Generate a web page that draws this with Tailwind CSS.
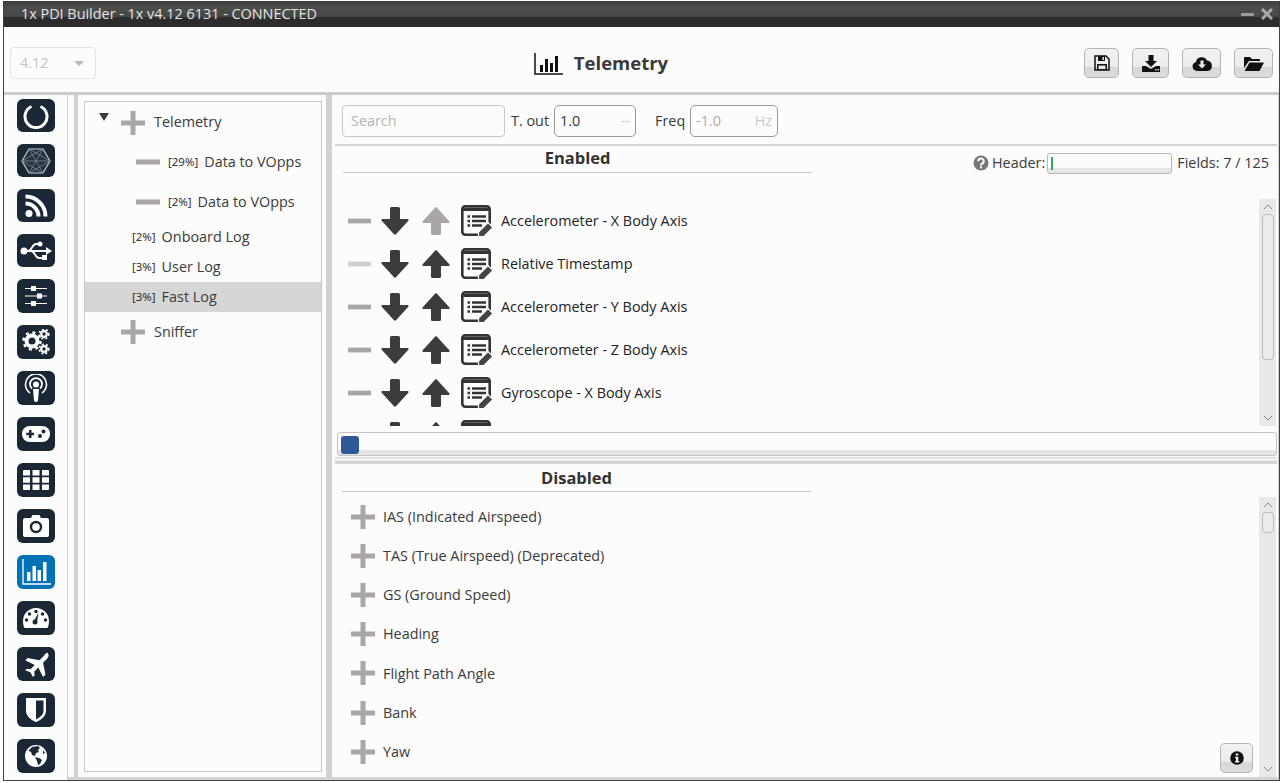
<!DOCTYPE html>
<html lang="en">
<head>
<meta charset="UTF-8">
<title>1x PDI Builder</title>
<script src="https://cdn.jsdelivr.net/npm/@tailwindcss/browser@4"></script>
</head>
<body class="bg-white overflow-hidden font-['Open_Sans',sans-serif] text-[14.4px] text-[#3a3a3a]">
<svg class="hidden">
  <symbol id="plus" viewBox="0 0 24 24"><path fill="#aba6a6" d="M9.5 0h5v9.5H24v5h-9.5V24h-5v-9.5H0v-5h9.5z"/></symbol>
  <symbol id="minus" viewBox="0 0 24 6"><rect y="0.5" width="24" height="5" fill="#aba6a6"/></symbol>
  <symbol id="down" viewBox="0 0 28 28"><path fill="currentColor" d="M9 1.500a1.500 1.500 0 0 1 1.500-1.500h7a1.500 1.500 0 0 1 1.500 1.500V12h7.500c1 0 1.500 1 .8 1.800L15 27.200c-.6.600-1.500.600-2 0L.7 13.800C0 13 .5 12 1.500 12H9z"/></symbol>
  <symbol id="note" viewBox="0 0 32 32">
    <path fill="none" stroke="#333" stroke-width="2.600" d="M28.700 20V4.300a3 3 0 0 0-3-3H4.300a3 3 0 0 0-3 3v22.400a3 3 0 0 0 3 3H18"/>
    <path fill="#333" d="M1 2.500h28V6H1z"/>
    <path stroke="#333" stroke-width="2.400" d="M6.500 11.500h2.500M11 11.500h14M6.500 16h2.500M11 16h14M6.500 20.500h2.500M11 20.500h10"/>
    <path fill="#444" stroke="#fcfcfc" stroke-width="1.200" d="M27 17.500l5 5-9 9h-5.500V27z"/>
  </symbol>
</svg>

<div class="w-[1283px] h-[783px] pl-[3px] pr-[3px] pt-[1px] pb-[2px]">
<div class="h-full border-x border-b border-[#404040] flex flex-col bg-[#fcfcfc]">

  <!-- title bar -->
  <div class="h-[26px] shrink-0 flex items-center justify-between pl-[17px] pr-[6px] text-[#e4e4e4] bg-[linear-gradient(#3b3b3b_0%,#4b4d4b_25%,#474947_60%,#2e2e2e_62%,#2b2b2b_100%)]">
    <span>1x PDI Builder - 1x v4.12 6131 - CONNECTED</span>
    <div class="flex items-center gap-[7px]">
      <div class="w-[13px] h-[3px] bg-[#9a9a9a]"></div>
      <svg class="w-[12px] h-[12px]" viewBox="0 0 12 12"><path stroke="#a8a8a8" stroke-width="3" d="M1 1l10 10M11 1L1 11"/></svg>
    </div>
  </div>

  <!-- header -->
  <div class="h-[68px] shrink-0 relative flex items-center justify-center border-b-[3px] border-[#cbcbcb]">
    <div class="absolute left-[6px] top-[20px] w-[86px] h-[32px] border border-[#e4e4e4] rounded-[4px] flex items-center justify-between pl-[9px] pr-[11px] text-[#c4c4c4]">
      <span>4.12</span>
      <div class="w-0 h-0 border-x-[5px] border-x-transparent border-t-[5px] border-t-[#b8b8b8]"></div>
    </div>
    <div class="flex items-center gap-[11px] mr-[81px] mt-[8px]">
      <svg class="w-[29px] h-[22px]" viewBox="0 0 29 22"><path fill="none" stroke="#111" stroke-width="1.500" d="M1 0v21h28"/><path fill="#111" d="M6 12h3v7H6zM11 6h3v13h-3zM16 10h3v9h-3zM21 3h3v16h-3z"/></svg>
      <span class="text-[18.500px] font-bold leading-none text-[#3a3a3a]">Telemetry</span>
    </div>
    <div class="absolute left-[1080px] top-[21px] flex">
      <button class="w-[35px] h-[30px] rounded-[5px] border border-[#b4b4b4] bg-[linear-gradient(#f2f2f2_0%,#ececec_65%,#d8d8d8_66%,#dcdcdc_100%)] flex items-center justify-center">
        <svg class="w-[16px] h-[16px]" viewBox="0 0 16 16"><path fill="none" stroke="#111" stroke-width="1.500" d="M1 1h11l3 3v11H1z"/><path fill="#111" d="M4 1h7v5H4zM3 9h10v6H3z"/><path fill="#e8e8e8" d="M8.500 2h1.500v3H8.500zM4.500 10.500h7V14h-7z"/></svg>
      </button>
      <button class="ml-[13px] w-[37px] h-[30px] rounded-[5px] border border-[#b4b4b4] bg-[linear-gradient(#f2f2f2_0%,#ececec_65%,#d8d8d8_66%,#dcdcdc_100%)] flex items-center justify-center">
        <svg class="w-[18px] h-[17px]" viewBox="0 0 18 17"><path fill="#111" d="M6.500 0h5v6H15L9 12 3 6h3.500zM0 11h4l5 3 5-3h4v6H0z"/><path fill="#ddd" d="M13 14h1.500v1.500H13zM15.500 14H17v1.500h-1.500z"/></svg>
      </button>
      <button class="ml-[13px] w-[39px] h-[30px] rounded-[5px] border border-[#b4b4b4] bg-[linear-gradient(#f2f2f2_0%,#ececec_65%,#d8d8d8_66%,#dcdcdc_100%)] flex items-center justify-center">
        <svg class="w-[20px] h-[15px]" viewBox="0 0 20 15"><path fill="#111" d="M5 15a4.500 4.500 0 0 1-1.200-8.800A6 6 0 0 1 15 4.500 5.300 5.300 0 0 1 15.500 15z"/><path fill="#e8e8e8" d="M8.500 4.500h3v4h2.500L10 12.500 6 8.500h2.500z"/></svg>
      </button>
      <button class="ml-[13px] w-[39px] h-[30px] rounded-[5px] border border-[#b4b4b4] bg-[linear-gradient(#f2f2f2_0%,#ececec_65%,#d8d8d8_66%,#dcdcdc_100%)] flex items-center justify-center">
        <svg class="w-[20px] h-[15px]" viewBox="0 0 20 15"><path fill="#111" d="M0 2a1 1 0 0 1 1-1h5l2 2h7a1 1 0 0 1 1 1v1H5L0 12z"/><path fill="#111" d="M5.500 6.500H20L15.500 15H0.500z"/></svg>
      </button>
    </div>
  </div>

  <!-- main -->
  <div class="flex-1 min-h-0 flex">

    <!-- icon rail -->
    <div class="w-[64px] shrink-0 flex flex-col items-start pl-[13px] pt-[4px] border-r border-[#cfcfcf]">
      <div class="w-[38px] h-[33px] rounded-[6px] bg-[#1a2836] flex items-center justify-center">
        <svg class="w-[26px] h-[26px]" viewBox="0 0 26 26"><path fill="none" stroke="#fff" stroke-width="3" d="M8.500 3.500a11 11 0 1 0 9 0"/></svg>
      </div>
      <div class="mt-[12px] w-[38px] h-[33px] rounded-[6px] bg-[#1a2836] flex items-center justify-center">
        <svg class="w-[30px] h-[28px]" viewBox="0 0 30 28"><path fill="#25333f" stroke="#c8ccd0" stroke-width="1.200" d="M8 2h14l7 12-7 12H8L1 14z"/><path fill="none" stroke="#8a949c" stroke-width=".7" d="M8 2l14 24M22 2L8 26M1 14h28M8 2l21 12M22 2L1 14M8 26l21-12M22 26L1 14"/></svg>
      </div>
      <div class="mt-[12px] w-[38px] h-[33px] rounded-[6px] bg-[#1a2836] flex items-center justify-center">
        <svg class="w-[24px] h-[24px]" viewBox="0 0 24 24"><circle cx="5" cy="19.500" r="3.500" fill="#fff"/><path fill="none" stroke="#fff" stroke-width="4" d="M1.500 9.500a13 13 0 0 1 13 13M1.500 2.500a20 20 0 0 1 20 20"/></svg>
      </div>
      <div class="mt-[12px] w-[38px] h-[33px] rounded-[6px] bg-[#1a2836] flex items-center justify-center">
        <svg class="w-[32px] h-[22px]" viewBox="0 0 32 22"><path fill="none" stroke="#fff" stroke-width="1.800" d="M4 11h25M8 11c4 0 4-7 8-7h3M11 11c4 0 4 7 8 7h3"/><circle cx="4" cy="11" r="3.500" fill="#fff"/><path fill="#fff" d="M26 7l6 4-6 4zM22 15h5v5h-5z"/><circle cx="20" cy="4" r="2.500" fill="#fff"/></svg>
      </div>
      <div class="mt-[12px] w-[38px] h-[34px] rounded-[6px] bg-[#1a2836] flex items-center justify-center">
        <svg class="w-[22px] h-[22px]" viewBox="0 0 22 22"><path stroke="#fff" stroke-width="1.200" d="M0 3.500h22M0 11h22M0 18.500h22"/><path fill="#fff" d="M6 1h5v5H6zM12 8.500h5v5h-5zM6 16h5v5H6z"/></svg>
      </div>
      <div class="mt-[12px] w-[38px] h-[34px] rounded-[6px] bg-[#1a2836] flex items-center justify-center">
        <svg class="w-[28px] h-[26px]" viewBox="0 0 28 26"><circle cx="10" cy="12" r="5.500" fill="none" stroke="#fff" stroke-width="4"/><circle cx="10" cy="12" r="8.500" fill="none" stroke="#fff" stroke-width="2.500" stroke-dasharray="3 3.700"/><circle cx="22" cy="5" r="2.800" fill="none" stroke="#fff" stroke-width="2.200"/><circle cx="22" cy="5" r="4.800" fill="none" stroke="#fff" stroke-width="1.600" stroke-dasharray="2 2"/><circle cx="22" cy="20" r="2.800" fill="none" stroke="#fff" stroke-width="2.200"/><circle cx="22" cy="20" r="4.800" fill="none" stroke="#fff" stroke-width="1.600" stroke-dasharray="2 2"/></svg>
      </div>
      <div class="mt-[12px] w-[38px] h-[34px] rounded-[6px] bg-[#1a2836] flex items-center justify-center">
        <svg class="w-[24px] h-[28px]" viewBox="0 0 24 28"><path fill="none" stroke="#fff" stroke-width="1.600" d="M6 19a10.500 10.500 0 1 1 12 0"/><path fill="none" stroke="#fff" stroke-width="1.800" d="M8 14.500a6 6 0 1 1 8 0"/><circle cx="12" cy="10.500" r="3" fill="#fff"/><path fill="#fff" d="M9 15h6l-1 11a2 2 0 0 1-4 0z"/></svg>
      </div>
      <div class="mt-[12px] w-[38px] h-[34px] rounded-[6px] bg-[#1a2836] flex items-center justify-center">
        <svg class="w-[28px] h-[16px]" viewBox="0 0 28 16"><rect width="28" height="16" rx="7.500" fill="#fff"/><path fill="#1a2836" d="M7 4h2.500v2.700H12v2.600H9.500V12H7V9.300H4.300V6.700H7z"/><circle cx="21.500" cy="5.500" r="2" fill="#1a2836"/><circle cx="18" cy="10" r="2" fill="#1a2836"/></svg>
      </div>
      <div class="mt-[12px] w-[38px] h-[34px] rounded-[6px] bg-[#1a2836] flex items-center justify-center">
        <svg class="w-[26px] h-[20px]" viewBox="0 0 26 20"><path fill="#fff" d="M0 1a1 1 0 0 1 1-1h6v5.500H0zM9.500 0h7v5.500h-7zM19 0h6a1 1 0 0 1 1 1v4.500h-7zM0 7.200h7v5.600H0zM9.500 7.200h7v5.600h-7zM19 7.200h7v5.600h-7zM0 14.500h7V20H1a1 1 0 0 1-1-1zM9.500 14.500h7V20h-7zM19 14.500h7V19a1 1 0 0 1-1 1h-6z"/></svg>
      </div>
      <div class="mt-[12px] w-[38px] h-[34px] rounded-[6px] bg-[#1a2836] flex items-center justify-center">
        <svg class="w-[26px] h-[22px]" viewBox="0 0 26 22"><path fill="#fff" d="M2 3h6l1.500-3h7L18 3h6a2 2 0 0 1 2 2v15a2 2 0 0 1-2 2H2a2 2 0 0 1-2-2V5a2 2 0 0 1 2-2z"/><circle cx="13" cy="12" r="5" fill="none" stroke="#1a2836" stroke-width="2.400"/></svg>
      </div>
      <div class="mt-[12px] w-[38px] h-[34px] rounded-[6px] bg-[#0072b5] flex items-center justify-center">
        <svg class="w-[29px] h-[26px]" viewBox="0 0 29 26"><path fill="none" stroke="#fff" stroke-width="1.300" d="M1 0v25h28"/><path fill="#fff" d="M5 13h3.500v9H5zM10.500 7H14v15h-3.500zM15.500 11H19v11h-3.500zM21 3h3.500v19H21z"/></svg>
      </div>
      <div class="mt-[12px] w-[38px] h-[34px] rounded-[6px] bg-[#1a2836] flex items-center justify-center">
        <svg class="w-[26px] h-[20px]" viewBox="0 0 26 20"><path fill="#fff" d="M13 0a13 13 0 0 1 13 13c0 2.500-.5 5-1.500 7h-23C.5 18 0 15.500 0 13A13 13 0 0 1 13 0z"/><g fill="#1a2836"><circle cx="13" cy="3.500" r="1.700"/><circle cx="6.500" cy="6" r="1.700"/><circle cx="3.500" cy="12" r="1.700"/><circle cx="22.500" cy="12" r="1.700"/><circle cx="19.500" cy="6" r="1.700"/><circle cx="12" cy="14" r="2.500"/><path d="M15.500 4.500l-1.500 9.500-3-1z"/></g></svg>
      </div>
      <div class="mt-[12px] w-[38px] h-[34px] rounded-[6px] bg-[#1a2836] flex items-center justify-center">
        <svg class="w-[25px] h-[25px]" viewBox="0 0 21 21"><path fill="#fff" d="M20 1c1.200 1.200.6 3.500-1 5l-3 3 2 10-2 2-4-8-3.500 3.500 .5 3-1.500 1.500-2.200-4L1 15.300 2.500 14l3 .5L9 11 1 7l2-2 10 2 3-3c1.500-1.600 2.800-4.200 4-3z"/></svg>
      </div>
      <div class="mt-[12px] w-[38px] h-[34px] rounded-[6px] bg-[#1a2836] flex items-center justify-center">
        <svg class="w-[20px] h-[24px]" viewBox="0 0 20 24"><path fill="#fff" d="M0 0h20v13c0 5-5 9-10 11C5 22 0 18 0 13z"/><path fill="#1a2836" d="M10 2.500h7.500V13c0 3.500-3.500 6.500-7.500 8.300z"/></svg>
      </div>
      <div class="mt-[12px] w-[38px] h-[34px] rounded-[6px] bg-[#1a2836] flex items-center justify-center">
        <svg class="w-[22px] h-[22px]" viewBox="0 0 22 22"><circle cx="11" cy="11" r="11" fill="#fff"/><path fill="#1a2836" d="M4 5l3-3 6-1 2 2-2 2 1 2-3 1-1 3-3-1-1-3-2-1zM10 12l4 1 3 2-2 4-2 1-1-4zM18 5l2 3-2 1z"/></svg>
      </div>
    </div>

    <!-- everything right of the rail sits on a grey bottom band -->
    <div class="flex-1 min-w-0 flex border-b-[3px] border-[#d4d4d4]">
      <div class="w-[16px] shrink-0 pl-[6px]"><div class="w-[4px] h-full bg-[#d2d2d2]"></div></div>

      <!-- tree -->
      <div class="w-[238px] shrink-0 mt-[6px] mb-[5px] border border-[#c8c8c8]">
        <div class="relative h-[40px] flex items-center pl-[36px]">
          <div class="absolute left-[14px] top-[11px] w-0 h-0 border-x-[5px] border-x-transparent border-t-[8px] border-t-[#3a3a3a]"></div>
          <svg class="w-[24px] h-[24px] mt-[1px]"><use href="#plus"/></svg>
          <span class="ml-[9px]">Telemetry</span>
        </div>
        <div class="h-[40px] flex items-center pl-[51px]">
          <svg class="w-[24px] h-[6px]"><use href="#minus"/></svg>
          <span class="ml-[8px] text-[11.500px] text-[#222]">[29%]</span><span class="ml-[6px]">Data to VOpps</span>
        </div>
        <div class="h-[40px] flex items-center pl-[51px]">
          <svg class="w-[24px] h-[6px]"><use href="#minus"/></svg>
          <span class="ml-[8px] text-[11.500px] text-[#222]">[2%]</span><span class="ml-[6px]">Data to VOpps</span>
        </div>
        <div class="h-[30px] flex items-center pl-[47px]"><span class="text-[11.500px] text-[#222]">[2%]</span><span class="ml-[6px]">Onboard Log</span></div>
        <div class="h-[30px] flex items-center pl-[47px]"><span class="text-[11.500px] text-[#222]">[3%]</span><span class="ml-[6px]">User Log</span></div>
        <div class="h-[30px] flex items-center pl-[47px] bg-[#d6d6d6]"><span class="text-[11.500px] text-[#222]">[3%]</span><span class="ml-[6px]">Fast Log</span></div>
        <div class="h-[40px] flex items-center pl-[36px]">
          <svg class="w-[24px] h-[24px]"><use href="#plus"/></svg>
          <span class="ml-[9px]">Sniffer</span>
        </div>
      </div>

      <div class="w-[13px] shrink-0 pl-[4px]"><div class="w-[6px] h-full bg-[#d2d2d2]"></div></div>

      <!-- right side -->
      <div class="flex-1 min-w-0 flex flex-col border-r border-[#cfcfcf] pr-[1px]">
        <!-- filter row -->
        <div class="h-[51px] shrink-0 flex items-center pl-[7px] pt-[3px] border-b-2 border-[#d2d2d2]">
          <div class="w-[163px] h-[32px] border border-[#c8c8c8] rounded-[4px] flex items-center pl-[8px] text-[#b4b4b4]">Search</div>
          <span class="ml-[6px] w-[43px]">T. out</span>
          <div class="w-[82px] h-[32px] border border-[#999] rounded-[5px] flex items-center justify-between pl-[5px] pr-[5px]"><span>1.0</span><span class="text-[#ccc]">--</span></div>
          <span class="ml-[19px] w-[35px]">Freq</span>
          <div class="w-[88px] h-[32px] border border-[#999] rounded-[5px] flex items-center justify-between pl-[5px] pr-[5px] text-[#aaa]"><span>-1.0</span><span class="text-[#ccc]">Hz</span></div>
        </div>

        <!-- enabled -->
        <div class="h-[286px] shrink-0 relative overflow-hidden flex flex-col">
          <div class="w-[469px] ml-[8px] h-[27px] border-b border-[#c8c8c8] text-center text-[16.500px] font-bold leading-[24px] text-[#333] shrink-0">Enabled</div>
          <div class="absolute top-[6px] left-[638px] flex items-center h-[22px]">
            <svg class="w-[16px] h-[16px]" viewBox="0 0 16 16"><circle cx="8" cy="8" r="7.500" fill="#777"/><path fill="none" stroke="#fff" stroke-width="2" d="M5.300 6.200a2.700 2.700 0 1 1 4 2.300c-.9.500-1.300 1-1.300 2"/><rect x="7" y="11.300" width="2" height="2" fill="#fff"/></svg>
            <span class="ml-[3px]">Header:</span>
            <div class="ml-[2px] w-[125px] h-[21px] rounded-[3px] border border-[#b8b8b8] bg-[linear-gradient(#fcfcfc_0%,#fcfcfc_75%,#e6e6e6_76%,#e6e6e6_100%)] pl-[3px] pt-[3px]"><div class="w-[2px] h-[13px] bg-[#2fa84f]"></div></div>
            <span class="ml-[5px] whitespace-nowrap">Fields: 7 / 125</span>
          </div>
          <div class="mt-[26px] relative flex-1 min-h-0 flex">
            <div class="flex-1 h-[227px] overflow-hidden pl-[13px] text-[#222]">
              <div class="h-[43px] flex items-center">
                <svg class="w-[23px] h-[6px]"><use href="#minus"/></svg>
                <svg class="ml-[10px] w-[28px] h-[28px] text-[#3c3c3c]"><use href="#down"/></svg>
                <svg class="ml-[13px] w-[28px] h-[28px] rotate-180 text-[#aba6a6]"><use href="#down"/></svg>
                <svg class="ml-[11px] w-[32px] h-[32px]"><use href="#note"/></svg>
                <span class="ml-[8px]">Accelerometer - X Body Axis</span>
              </div>
              <div class="h-[43px] flex items-center">
                <svg class="w-[23px] h-[6px] opacity-50"><use href="#minus"/></svg>
                <svg class="ml-[10px] w-[28px] h-[28px] text-[#3c3c3c]"><use href="#down"/></svg>
                <svg class="ml-[13px] w-[28px] h-[28px] rotate-180 text-[#3c3c3c]"><use href="#down"/></svg>
                <svg class="ml-[11px] w-[32px] h-[32px]"><use href="#note"/></svg>
                <span class="ml-[8px]">Relative Timestamp</span>
              </div>
              <div class="h-[43px] flex items-center">
                <svg class="w-[23px] h-[6px]"><use href="#minus"/></svg>
                <svg class="ml-[10px] w-[28px] h-[28px] text-[#3c3c3c]"><use href="#down"/></svg>
                <svg class="ml-[13px] w-[28px] h-[28px] rotate-180 text-[#3c3c3c]"><use href="#down"/></svg>
                <svg class="ml-[11px] w-[32px] h-[32px]"><use href="#note"/></svg>
                <span class="ml-[8px]">Accelerometer - Y Body Axis</span>
              </div>
              <div class="h-[43px] flex items-center">
                <svg class="w-[23px] h-[6px]"><use href="#minus"/></svg>
                <svg class="ml-[10px] w-[28px] h-[28px] text-[#3c3c3c]"><use href="#down"/></svg>
                <svg class="ml-[13px] w-[28px] h-[28px] rotate-180 text-[#3c3c3c]"><use href="#down"/></svg>
                <svg class="ml-[11px] w-[32px] h-[32px]"><use href="#note"/></svg>
                <span class="ml-[8px]">Accelerometer - Z Body Axis</span>
              </div>
              <div class="h-[43px] flex items-center">
                <svg class="w-[23px] h-[6px]"><use href="#minus"/></svg>
                <svg class="ml-[10px] w-[28px] h-[28px] text-[#3c3c3c]"><use href="#down"/></svg>
                <svg class="ml-[13px] w-[28px] h-[28px] rotate-180 text-[#3c3c3c]"><use href="#down"/></svg>
                <svg class="ml-[11px] w-[32px] h-[32px]"><use href="#note"/></svg>
                <span class="ml-[8px]">Gyroscope - X Body Axis</span>
              </div>
              <div class="h-[43px] flex items-center">
                <svg class="w-[23px] h-[6px]"><use href="#minus"/></svg>
                <svg class="ml-[10px] w-[28px] h-[28px] text-[#3c3c3c]"><use href="#down"/></svg>
                <svg class="ml-[13px] w-[28px] h-[28px] rotate-180 text-[#3c3c3c]"><use href="#down"/></svg>
                <svg class="ml-[11px] w-[32px] h-[32px]"><use href="#note"/></svg>
              </div>
            </div>
            <div class="w-[17px] h-[227px] mr-[1px] bg-[#e8e8e8] flex flex-col items-center">
              <svg class="w-[10px] h-[6px] mt-[5px]" viewBox="0 0 10 6"><path fill="none" stroke="#888" d="M1 5l4-4 4 4"/></svg>
              <div class="mt-[4px] w-[12px] h-[146px] rounded-[4px] border border-[#bbb] bg-[#ececec]"></div>
              <svg class="w-[10px] h-[6px] mt-auto mb-[5px]" viewBox="0 0 10 6"><path fill="none" stroke="#888" d="M1 1l4 4 4-4"/></svg>
            </div>
          </div>
        </div>

        <!-- progress bar -->
        <div class="h-[24px] shrink-0 ml-[2px] border border-[#c4c4c4] rounded-[3px] bg-[linear-gradient(#fcfcfc_0%,#fcfcfc_75%,#e4e4e4_76%,#e4e4e4_100%)] pl-[3px] pt-[3px]">
          <div class="w-[18px] h-[18px] rounded-[3px] bg-[#2f5a98]"></div>
        </div>
        <div class="h-[7px] shrink-0 mt-[1px] border-b-[3px] border-t border-[#d4d4d4] bg-[#f0f0f0]"></div>

        <!-- disabled -->
        <div class="flex-1 min-h-0 relative flex flex-col overflow-hidden">
          <div class="w-[469px] ml-[7px] h-[28px] border-b border-[#c8c8c8] text-center text-[16.500px] font-bold leading-[27px] text-[#333] shrink-0">Disabled</div>
          <div class="mt-[5px] flex-1 min-h-0 flex">
            <div class="flex-1 pl-[16px] text-[#3a3a3a]">
              <div class="h-[39.200px] flex items-center"><svg class="w-[24px] h-[24px]"><use href="#plus"/></svg><span class="ml-[8px]">IAS (Indicated Airspeed)</span></div>
              <div class="h-[39.200px] flex items-center"><svg class="w-[24px] h-[24px]"><use href="#plus"/></svg><span class="ml-[8px]">TAS (True Airspeed) (Deprecated)</span></div>
              <div class="h-[39.200px] flex items-center"><svg class="w-[24px] h-[24px]"><use href="#plus"/></svg><span class="ml-[8px]">GS (Ground Speed)</span></div>
              <div class="h-[39.200px] flex items-center"><svg class="w-[24px] h-[24px]"><use href="#plus"/></svg><span class="ml-[8px]">Heading</span></div>
              <div class="h-[39.200px] flex items-center"><svg class="w-[24px] h-[24px]"><use href="#plus"/></svg><span class="ml-[8px]">Flight Path Angle</span></div>
              <div class="h-[39.200px] flex items-center"><svg class="w-[24px] h-[24px]"><use href="#plus"/></svg><span class="ml-[8px]">Bank</span></div>
              <div class="h-[39.200px] flex items-center"><svg class="w-[24px] h-[24px]"><use href="#plus"/></svg><span class="ml-[8px]">Yaw</span></div>
            </div>
            <div class="w-[17px] mr-[1px] bg-[#e8e8e8] flex flex-col items-center">
              <svg class="w-[10px] h-[6px] mt-[5px]" viewBox="0 0 10 6"><path fill="none" stroke="#888" d="M1 5l4-4 4 4"/></svg>
              <div class="mt-[4px] w-[12px] h-[21px] rounded-[4px] border border-[#bbb] bg-[#ececec]"></div>
              <svg class="w-[10px] h-[6px] mt-auto mb-[5px]" viewBox="0 0 10 6"><path fill="none" stroke="#888" d="M1 1l4 4 4-4"/></svg>
            </div>
          </div>
          <button class="absolute right-[24px] bottom-[4px] w-[33px] h-[30px] rounded-[5px] border border-[#b4b4b4] bg-[linear-gradient(#f2f2f2_0%,#ececec_65%,#d8d8d8_66%,#dcdcdc_100%)] flex items-center justify-center">
            <svg class="w-[14px] h-[14px]" viewBox="0 0 14 14"><circle cx="7" cy="7" r="6.800" fill="#111"/><path fill="#eee" d="M5.700 2.500h2.600v2H5.700zM5 5.700h3.300v4.300h1v1.500H5V10h1V7.200H5z"/></svg>
          </button>
        </div>
      </div>
    </div>
  </div>
</div>
</div>
</body>
</html>
